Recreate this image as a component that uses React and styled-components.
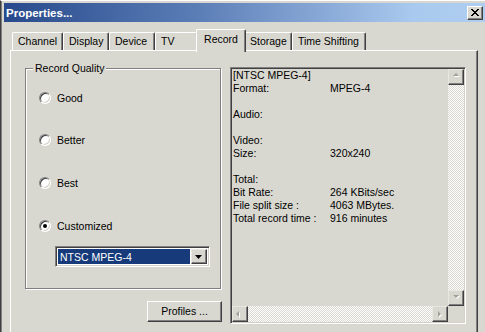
import React from 'react'
import styled, { createGlobalStyle } from 'styled-components'

const BG = '#d9d8d0'

const Global = createGlobalStyle`
  html, body { margin: 0; padding: 0; background: ${BG}; }
  * { box-sizing: border-box; }
`

const Window = styled.div`
  width: 485px;
  height: 332px;
  overflow: hidden;
  background: ${BG};
  border-top: 1px solid #fff;
  border-left: 1px solid #404040;
  box-shadow: inset 1px 0 0 #808080;
  padding-top: 2px;
  font-family: 'Liberation Sans', Arial, sans-serif;
  font-size: 10.5px;
  color: #000;
`

const TitleBar = styled.div`
  height: 19px;
  margin-left: 3px;
  display: flex;
  align-items: center;
  justify-content: space-between;
  padding: 0 2px;
  background: linear-gradient(90deg, #284a8c 0%, #5b7db6 40%, #a9c9ee 85%, #aecdf0 100%);
`

const Title = styled.span`
  color: #fff;
  font-weight: bold;
  font-size: 11.5px;
`

const CloseButton = styled.div`
  width: 16px;
  height: 14px;
  background: ${BG};
  border: 1px solid;
  border-color: #fff #404040 #404040 #fff;
  box-shadow: inset -1px -1px 0 #808080;
  display: flex;
  align-items: center;
  justify-content: center;
`

const Body = styled.div`
  padding: 7px 0 0 9px;
`

const TabRow = styled.div`
  display: flex;
  align-items: flex-end;
  height: 21px;
  padding-left: 2px;
  position: relative;
  z-index: 1;
`

const Tab = styled.div`
  width: ${p => p.$w}px;
  height: ${p => (p.$active ? 23 : 18)}px;
  margin: ${p => (p.$active ? '0 -2px -2px -2px' : '0')};
  padding-bottom: ${p => (p.$active ? 4 : 1)}px;
  background: ${BG};
  border: 1px solid;
  border-color: #fff #404040 transparent #fff;
  border-bottom: none;
  border-radius: 2px 2px 0 0;
  box-shadow: inset -1px 0 0 #808080;
  display: flex;
  align-items: center;
  justify-content: ${p => (p.$active ? 'center' : 'flex-start')};
  padding-left: ${p => (p.$active ? 0 : 5)}px;
  position: relative;
  z-index: ${p => (p.$active ? 2 : 1)};
  white-space: nowrap;
`

const Panel = styled.div`
  width: 468px;
  height: 300px;
  border: 1px solid;
  border-color: #fff #404040 #404040 #fff;
  box-shadow: inset -1px -1px 0 #808080;
  display: flex;
  gap: 8px;
  padding: 17px 0 0 14px;
`

const LeftColumn = styled.div`
  width: 197px;
  display: flex;
  flex-direction: column;
`

const GroupBox = styled.div`
  position: relative;
  width: 196px;
  height: 221px;
  border: 1px solid #808080;
  box-shadow: 1px 1px 0 #fff, inset 1px 1px 0 #fff;
  padding: 22px 0 0 13px;
  display: flex;
  flex-direction: column;
`

const GroupLabel = styled.span`
  position: absolute;
  top: -7px;
  left: 7px;
  padding: 0 2px;
  background: ${BG};
  line-height: 13px;
`

const RadioList = styled.div`
  display: flex;
  flex-direction: column;
  gap: 29.7px;
`

const RadioRow = styled.label`
  display: flex;
  align-items: center;
  height: 13px;
  gap: 6px;
`

const RadioDot = styled.span`
  position: relative;
  width: 12px;
  height: 12px;
  border-radius: 50%;
  background: #fff;
  border: 1px solid;
  border-color: #808080 #fff #fff #808080;
  box-shadow: inset 1px 1px 0 #404040, inset -1px -1px 0 #d4d0c8;
  &::after {
    content: '';
    display: ${p => (p.$checked ? 'block' : 'none')};
    position: absolute;
    left: 3px;
    top: 3px;
    width: 4px;
    height: 4px;
    border-radius: 50%;
    background: #000;
  }
`

const Combo = styled.div`
  margin: 14px 0 0 16px;
  width: 155px;
  height: 21px;
  border: 1px solid;
  border-color: #808080 #fff #fff #808080;
  box-shadow: inset 1px 1px 0 #404040, inset -1px -1px 0 #d4d0c8;
  background: #fff;
  padding: 2px;
  display: flex;
`

const ComboValue = styled.div`
  flex: 1;
  background: #163a7a;
  color: #fff;
  padding-left: 2px;
  display: flex;
  align-items: center;
`

const ComboButton = styled.div`
  width: 16px;
  margin-left: 1px;
  background: ${BG};
  border: 1px solid;
  border-color: #e8e8e0 #404040 #404040 #e8e8e0;
  box-shadow: inset -1px -1px 0 #808080;
  display: flex;
  align-items: center;
  justify-content: center;
`

const Button = styled.div`
  align-self: flex-end;
  margin-top: 12px;
  width: 75px;
  height: 21px;
  border: 1px solid;
  border-color: #fff #404040 #404040 #fff;
  box-shadow: inset -1px -1px 0 #808080;
  display: flex;
  align-items: center;
  justify-content: center;
  padding-bottom: 1px;
`

const InfoBox = styled.div`
  width: 236px;
  height: 257px;
  margin-top: -1px;
  border: 1px solid;
  border-color: #808080 #fff #fff #808080;
  box-shadow: inset 1px 1px 0 #404040, inset -1px -1px 0 #d4d0c8;
  padding: 1px;
  display: grid;
  grid-template-columns: 1fr 16px;
  grid-template-rows: 1fr 16px;
`

const InfoText = styled.div`
  padding-left: 1px;
  display: grid;
  grid-template-columns: 97px 1fr;
  grid-auto-rows: 13px;
  line-height: 13px;
  align-content: start;
  white-space: nowrap;
`

const Track = styled.div`
  display: flex;
  flex-direction: ${p => (p.$vertical ? 'column' : 'row')};
  justify-content: space-between;
  background-color: #fff;
  background-image: repeating-conic-gradient(${BG} 0 25%, #fff 0 50%);
  background-size: 2px 2px;
`

const ArrowButton = styled.div`
  width: 16px;
  height: 16px;
  background: ${BG};
  border: 1px solid;
  border-color: #e8e8e0 #404040 #404040 #e8e8e0;
  box-shadow: inset -1px -1px 0 #808080;
  display: flex;
  align-items: center;
  justify-content: center;
`

const Corner = styled.div`
  background: ${BG};
`

const arrows = {
  up: '4,6 7,3 10,6',
  down: '4,4 10,4 7,7',
  left: '6,4 6,10 3,7',
  right: '5,4 5,10 8,7',
}

function DisabledArrow({ dir }) {
  return (
    <svg width="14" height="14" viewBox="0 0 14 14" style={{ marginLeft: -1, marginTop: -1 }}>
      <polygon points={arrows[dir]} fill="#fff" transform="translate(1 1)" />
      <polygon points={arrows[dir]} fill="#a0a09a" />
    </svg>
  )
}

const tabs = [
  { label: 'Channel', w: 51 },
  { label: 'Display', w: 46 },
  { label: 'Device', w: 46 },
  { label: 'TV', w: 43 },
  { label: 'Record', w: 50, active: true },
  { label: 'Storage', w: 48 },
  { label: 'Time Shifting', w: 74 },
]

const qualities = [
  { label: 'Good' },
  { label: 'Better' },
  { label: 'Best' },
  { label: 'Customized', checked: true },
]

const info = [
  ['[NTSC MPEG-4]', ''],
  ['Format:', 'MPEG-4'],
  ['', ''],
  ['Audio:', ''],
  ['', ''],
  ['Video:', ''],
  ['Size:', '320x240'],
  ['', ''],
  ['Total:', ''],
  ['Bit Rate:', '264 KBits/sec'],
  ['File split size :', '4063 MBytes.'],
  ['Total record time :', '916 minutes'],
]

export default function App() {
  return (
    <>
      <Global />
      <Window>
        <TitleBar>
          <Title>Properties...</Title>
          <CloseButton>
            <svg width="8" height="7" viewBox="0 0 8 7">
              <path d="M0 0 L7 7 M1 0 L8 7 M7 0 L0 7 M8 0 L1 7" stroke="#000" strokeWidth="1" />
            </svg>
          </CloseButton>
        </TitleBar>

        <Body>
          <TabRow>
            {tabs.map(t => (
              <Tab key={t.label} $w={t.w} $active={t.active}>{t.label}</Tab>
            ))}
          </TabRow>

          <Panel>
            <LeftColumn>
              <GroupBox>
                <GroupLabel>Record Quality</GroupLabel>
                <RadioList>
                  {qualities.map(q => (
                    <RadioRow key={q.label}>
                      <RadioDot $checked={q.checked} />
                      {q.label}
                    </RadioRow>
                  ))}
                </RadioList>
                <Combo>
                  <ComboValue>NTSC MPEG-4</ComboValue>
                  <ComboButton>
                    <svg width="8" height="4" viewBox="0 0 8 4">
                      <polygon points="0,0 7,0 3.5,4" fill="#000" />
                    </svg>
                  </ComboButton>
                </Combo>
              </GroupBox>
              <Button>Profiles ...</Button>
            </LeftColumn>

            <InfoBox>
              <InfoText>
                {info.map(([k, v], i) => (
                  <React.Fragment key={i}>
                    <span>{k}</span>
                    <span>{v}</span>
                  </React.Fragment>
                ))}
              </InfoText>
              <Track $vertical>
                <ArrowButton><DisabledArrow dir="up" /></ArrowButton>
                <ArrowButton><DisabledArrow dir="down" /></ArrowButton>
              </Track>
              <Track>
                <ArrowButton><DisabledArrow dir="left" /></ArrowButton>
                <ArrowButton><DisabledArrow dir="right" /></ArrowButton>
              </Track>
              <Corner />
            </InfoBox>
          </Panel>
        </Body>
      </Window>
    </>
  )
}
